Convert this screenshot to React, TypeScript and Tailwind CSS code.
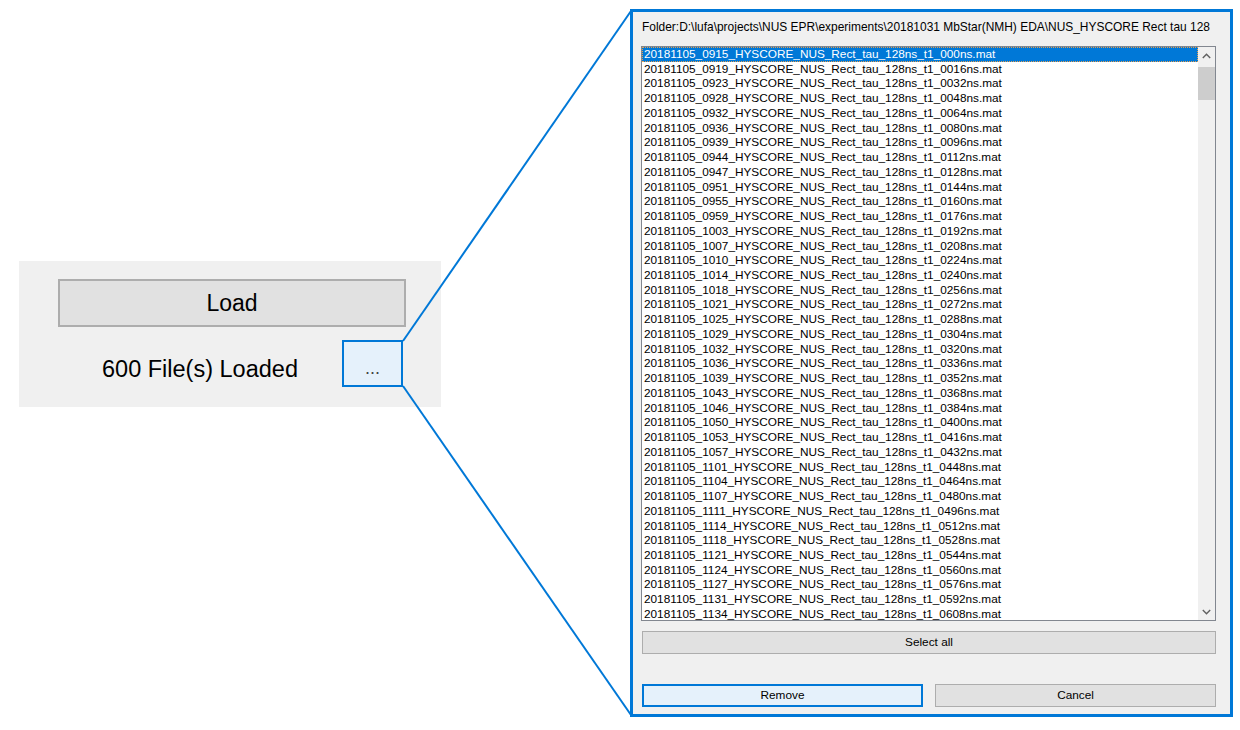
import React from "react";

const times = [
  "0915","0919","0923","0928","0932","0936","0939","0944","0947","0951","0955","0959",
  "1003","1007","1010","1014","1018","1021","1025","1029","1032","1036","1039","1043",
  "1046","1050","1053","1057","1101","1104","1107","1111","1114","1118","1121","1124",
  "1127","1131","1134",
];

const files = times.map((t, i) => {
  const ns = i === 0 ? "000" : String(i * 16).padStart(4, "0");
  return `20181105_${t}_HYSCORE_NUS_Rect_tau_128ns_t1_${ns}ns.mat`;
});

export default function App() {
  return (
    <div
      className="relative w-[1240px] h-[730px] bg-white overflow-hidden"
      style={{ fontFamily: '"Liberation Sans", Arial, sans-serif' }}
    >
      <div className="flex items-start">
        {/* Left panel */}
        <div className="ml-[19px] mt-[261px] w-[422px] h-[146px] bg-[#f0f0f0] flex flex-col">
          <div className="ml-[39px] mt-[18px] w-[348px] h-[48px] bg-[#e1e1e1] border-2 border-[#adadad] flex items-center justify-center text-[23px] text-black">
            Load
          </div>
          <div className="flex items-start mt-[13px]">
            <div className="ml-[83px] w-[200px] text-[23.5px] leading-[28px] text-black whitespace-nowrap mt-[15px]">
              600 File(s) Loaded
            </div>
            <div className="ml-[40px] w-[61px] h-[47px] bg-[#e5f1fb] border-2 border-[#0078d7] flex items-center justify-center text-[18px] text-[#444] pt-[9px]">
              ...
            </div>
          </div>
        </div>

        {/* Dialog */}
        <div className="ml-[189px] mt-[9px] w-[603px] h-[708px] border-[3px] border-[#0078d7] bg-[#f0f0f0] flex flex-col pl-[8px] pr-[14px] pt-[8px] text-[11.8px] text-black">
          <div className="ml-[1px] h-[15px] leading-[15px] whitespace-nowrap text-[11.95px]">
            Folder:D:\lufa\projects\NUS EPR\experiments\20181031 MbStar(NMH) EDA\NUS_HYSCORE Rect tau 128
          </div>
          <div className="mt-[11px] h-[575px] border border-[#828790] bg-white flex">
            <div className="flex-1 flex flex-col overflow-hidden">
              {files.map((f, i) => (
                <div
                  key={f}
                  className={
                    i === 0
                      ? "h-[14.74px] shrink-0 leading-[13px] pl-[1px] bg-[#0078d7] text-white border border-dotted border-[#e8a050] whitespace-nowrap"
                      : "h-[14.74px] shrink-0 leading-[14.74px] pl-[2px] whitespace-nowrap"
                  }
                >
                  {f}
                </div>
              ))}
            </div>
            <div className="w-[17px] bg-[#f0f0f0] flex flex-col">
              <div className="h-[17px] flex items-center justify-center">
                <svg width="9" height="6" viewBox="0 0 9 6">
                  <path d="M0.8 5 L4.5 1.3 L8.2 5" fill="none" stroke="#606060" strokeWidth="1.4" />
                </svg>
              </div>
              <div className="mt-[3px] h-[33px] bg-[#cdcdcd]" />
              <div className="flex-1" />
              <div className="h-[17px] flex items-center justify-center">
                <svg width="9" height="6" viewBox="0 0 9 6">
                  <path d="M0.8 1 L4.5 4.7 L8.2 1" fill="none" stroke="#606060" strokeWidth="1.4" />
                </svg>
              </div>
            </div>
          </div>
          <div className="mt-[10px] ml-[1px] h-[23px] bg-[#e1e1e1] border border-[#adadad] flex items-center justify-center">
            Select all
          </div>
          <div className="mt-[30px] ml-[1px] flex gap-[12px]">
            <div className="w-[281px] h-[23px] bg-[#e5f1fb] border-2 border-[#0078d7] flex items-center justify-center">
              Remove
            </div>
            <div className="flex-1 h-[23px] bg-[#e1e1e1] border border-[#adadad] flex items-center justify-center">
              Cancel
            </div>
          </div>
        </div>
      </div>

      {/* Connector lines */}
      <svg
        className="absolute left-0 top-0 pointer-events-none"
        width="1240"
        height="730"
        viewBox="0 0 1240 730"
      >
        <line x1="403" y1="341" x2="631" y2="11" stroke="#0078d7" strokeWidth="2" />
        <line x1="403" y1="386" x2="631" y2="715" stroke="#0078d7" strokeWidth="2" />
      </svg>
    </div>
  );
}
